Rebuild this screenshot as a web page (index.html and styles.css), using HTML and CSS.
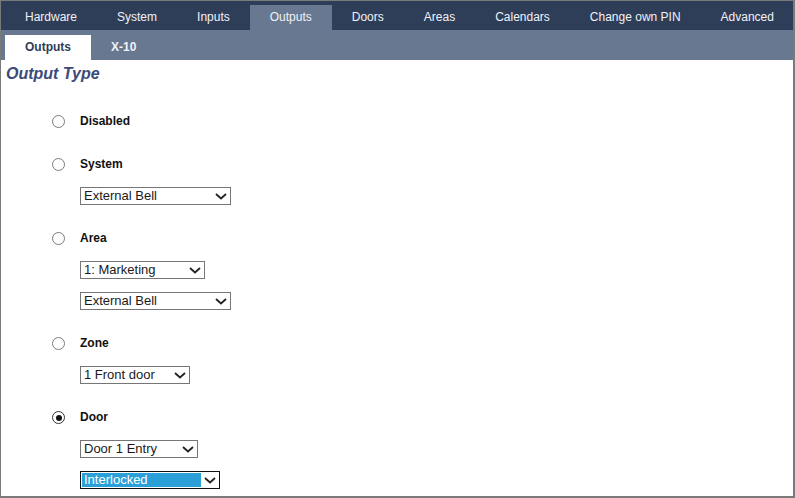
FILE: index.html
```html
<!DOCTYPE html>
<html>
<head>
<meta charset="utf-8">
<link rel="stylesheet" href="styles.css">
</head>
<body>
<div class="frame">
  <nav class="topnav">
    <a class="tab">Hardware</a>
    <a class="tab">System</a>
    <a class="tab">Inputs</a>
    <a class="tab active">Outputs</a>
    <a class="tab">Doors</a>
    <a class="tab">Areas</a>
    <a class="tab">Calendars</a>
    <a class="tab">Change own PIN</a>
    <a class="tab">Advanced</a>
  </nav>
  <nav class="subnav">
    <a class="subtab active">Outputs</a>
    <a class="subtab">X-10</a>
  </nav>
  <h1 class="heading">Output Type</h1>
  <div class="options">
    <div class="group">
      <label class="opt"><input type="radio" name="t" class="radio"><span>Disabled</span></label>
    </div>
    <div class="group">
      <label class="opt"><input type="radio" name="t" class="radio"><span>System</span></label>
      <div class="select w151"><span class="val">External Bell</span><svg class="chev" width="12" height="7" viewBox="0 0 12 7"><path d="M1 1 L6 5.5 L11 1" fill="none" stroke="#222" stroke-width="1.8"/></svg></div>
    </div>
    <div class="group">
      <label class="opt"><input type="radio" name="t" class="radio"><span>Area</span></label>
      <div class="select w125"><span class="val">1: Marketing</span><svg class="chev" width="12" height="7" viewBox="0 0 12 7"><path d="M1 1 L6 5.5 L11 1" fill="none" stroke="#222" stroke-width="1.8"/></svg></div>
      <div class="select w151"><span class="val">External Bell</span><svg class="chev" width="12" height="7" viewBox="0 0 12 7"><path d="M1 1 L6 5.5 L11 1" fill="none" stroke="#222" stroke-width="1.8"/></svg></div>
    </div>
    <div class="group">
      <label class="opt"><input type="radio" name="t" class="radio"><span>Zone</span></label>
      <div class="select w110"><span class="val">1 Front door</span><svg class="chev" width="12" height="7" viewBox="0 0 12 7"><path d="M1 1 L6 5.5 L11 1" fill="none" stroke="#222" stroke-width="1.8"/></svg></div>
    </div>
    <div class="group">
      <label class="opt"><input type="radio" name="t" class="radio" checked><span>Door</span></label>
      <div class="select w118"><span class="val">Door 1 Entry</span><svg class="chev" width="12" height="7" viewBox="0 0 12 7"><path d="M1 1 L6 5.5 L11 1" fill="none" stroke="#222" stroke-width="1.8"/></svg></div>
      <div class="select w140 focused"><span class="val">Interlocked</span><svg class="chev" width="12" height="7" viewBox="0 0 12 7"><path d="M1 1 L6 5.5 L11 1" fill="none" stroke="#222" stroke-width="1.8"/></svg></div>
    </div>
  </div>
</div>
</body>
</html>
```

FILE: styles.css
```css
html, body {
  margin: 0;
  padding: 0;
  background: #fff;
}
.frame {
  box-sizing: border-box;
  width: 795px;
  height: 498px;
  border-style: solid;
  border-color: #7a7a7a;
  border-width: 1px 2px 2px 1px;
  font-family: "Liberation Sans", Arial, sans-serif;
  overflow: hidden;
  background: #fff;
}
.topnav {
  display: flex;
  align-items: flex-end;
  height: 29px;
  padding-left: 4px;
  background: #2e3d58;
}
.tab {
  display: block;
  height: 25px;
  line-height: 25px;
  padding: 0 20px;
  font-size: 12px;
  color: #f0f2f6;
  white-space: nowrap;
}
.tab.active {
  background: #687891;
}
.subnav {
  display: flex;
  align-items: flex-end;
  height: 30px;
  padding-left: 4px;
  background: #687891;
}
.subtab {
  display: block;
  height: 25px;
  line-height: 24px;
  padding: 0 20px;
  font-size: 12px;
  font-weight: bold;
  color: #f0f2f6;
}
.subtab.active {
  background: #fff;
  color: #2e3d58;
}
.heading {
  margin: 4px 0 0 5px;
  height: 20px;
  line-height: 20px;
  font-size: 16px;
  font-weight: bold;
  font-style: italic;
  color: #3c4a78;
}
.options {
  margin-top: 27px;
  padding-left: 51px;
  display: flex;
  flex-direction: column;
  gap: 23px;
}
.group {
  display: flex;
  flex-direction: column;
  align-items: flex-start;
}
.opt {
  display: flex;
  align-items: center;
  height: 20px;
  font-size: 12px;
  font-weight: bold;
  color: #111;
}
.radio {
  -webkit-appearance: none;
  appearance: none;
  box-sizing: border-box;
  width: 13px;
  height: 13px;
  margin: 1px 15px 0 0;
  border: 1px solid #7b7b7b;
  border-radius: 50%;
  background: #fff;
  position: relative;
}
.radio:checked {
  border-color: #333;
}
.radio:checked::after {
  content: "";
  position: absolute;
  left: 2.5px;
  top: 2.5px;
  width: 6px;
  height: 6px;
  border-radius: 50%;
  background: #111;
}
.select {
  box-sizing: border-box;
  display: flex;
  align-items: center;
  justify-content: space-between;
  height: 18px;
  margin: 13px 0 0 28px;
  padding: 0 3px 0 3px;
  border: 1px solid #767676;
  font-size: 13px;
  color: #1a1a1a;
  background: #fff;
}
.select + .select {
  margin-top: 13px;
}
.val {
  white-space: nowrap;
  line-height: 16px;
}
.chev {
  flex: none;
}
.w151 { width: 151px; }
.w125 { width: 125px; }
.w110 { width: 110px; }
.w118 { width: 118px; }
.w140 { width: 140px; }
.select.focused {
  border-color: #111;
  padding-left: 1px;
}
.select.focused .val {
  flex: 1;
  background: #2a9fd8;
  color: #fff;
  padding-left: 2px;
  margin-right: 3px;
  line-height: 14px;
}
```
